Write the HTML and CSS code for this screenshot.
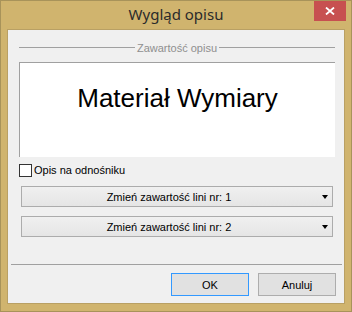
FILE: index.html
```html
<!DOCTYPE html>
<html lang="pl">
<head>
    <meta charset="UTF-8">
    <title>Wygląd opisu</title>
    <link rel="stylesheet" href="styles.css">
</head>
<body>
    <div class="window">
        <div class="titlebar">
            <div class="title">Wygląd opisu</div>
            <div class="close-btn">
                <svg width="10" height="8" viewBox="0 0 10 8">
                    <path d="M1 0.5 L9 7.5 M9 0.5 L1 7.5" stroke="#fff" stroke-width="1.8" fill="none"/>
                </svg>
            </div>
        </div>
        <div class="client">
            <!-- Zawartosc opisu -->
            <div class="group-head">
                <span class="group-line"></span>
                <span class="group-title">Zawartość opisu</span>
                <span class="group-line"></span>
            </div>
            <div class="preview">Materiał Wymiary</div>

            <label class="check-row">
                <span class="checkbox"></span>
                <span>Opis na odnośniku</span>
            </label>

            <div class="drop-btn">
                <span class="drop-text">Zmień zawartość lini nr: 1</span>
                <span class="drop-arrow"></span>
            </div>
            <div class="drop-btn">
                <span class="drop-text">Zmień zawartość lini nr: 2</span>
                <span class="drop-arrow"></span>
            </div>

            <div class="separator"></div>

            <div class="buttons">
                <div class="btn default">OK</div>
                <div class="btn">Anuluj</div>
            </div>
        </div>
    </div>
</body>
</html>
```

FILE: styles.css
```css
body {
    margin: 0;
    font-family: "Liberation Sans", Arial, sans-serif;
    font-size: 11px;
}
.window {
    width: 352px;
    height: 312px;
    box-sizing: border-box;
    border: 1px solid #a8935a;
    background-color: #d0b46e;
    display: flex;
    flex-direction: column;
}
.titlebar {
    position: relative;
    height: 28px;
}
.title {
    text-align: center;
    font-family: "Noto Sans", sans-serif;
    font-size: 15px;
    line-height: 20px;
    padding-top: 3px;
    color: #2b2b2b;
}
.close-btn {
    position: absolute;
    top: 0;
    right: 5px;
    width: 32px;
    height: 20px;
    background-color: #c75050;
    display: flex;
    align-items: center;
    justify-content: center;
}
.client {
    margin: 0 6px 7px 6px;
    flex: 1;
    border: 1px solid #b9a064;
    background-color: #f0f0f0;
    display: flex;
    flex-direction: column;
    padding-top: 10px;
}
.group-head {
    display: flex;
    align-items: center;
    height: 15px;
    margin: 0 9px 0 11px;
}
.group-line {
    flex: 1;
    height: 1px;
    background-color: #a0a0a0;
}
.group-title {
    color: #8f8f8f;
    padding: 0 2px;
}
.preview {
    margin: 7px 9px 0 11px;
    height: 74px;
    padding-top: 20px;
    background-color: #fff;
    border-top: 1px solid #a0a0a0;
    border-left: 1px solid #a0a0a0;
    font-size: 26px;
    line-height: 30px;
    text-align: center;
}
.check-row {
    display: flex;
    align-items: center;
    height: 13px;
    margin: 7px 0 0 11px;
    line-height: 13px;
    gap: 2px;
}
.checkbox {
    width: 11px;
    height: 11px;
    border: 1px solid #333;
    background-color: #fff;
}
.drop-btn {
    margin: 9px 11px 0 13px;
    height: 19px;
    border: 1px solid #acacac;
    background: linear-gradient(#f0f0f0, #e5e5e5);
    display: flex;
    align-items: center;
}
.drop-text {
    flex: 1;
    text-align: center;
}
.drop-arrow {
    width: 0;
    height: 0;
    border-left: 3.5px solid transparent;
    border-right: 3.5px solid transparent;
    border-top: 4px solid #000;
    margin: 1px 4px 0 6px;
}
.separator {
    margin: 27px 2px 0 3px;
    height: 1px;
    background-color: #a0a0a0;
}
.buttons {
    display: flex;
    justify-content: flex-end;
    gap: 9px;
    margin: 8px 8px 0 0;
}
.btn {
    width: 76px;
    height: 21px;
    border: 1px solid #adadad;
    background-color: #e1e1e1;
    display: flex;
    align-items: center;
    justify-content: center;
}
.btn.default {
    border-color: #3399ff;
}
```
